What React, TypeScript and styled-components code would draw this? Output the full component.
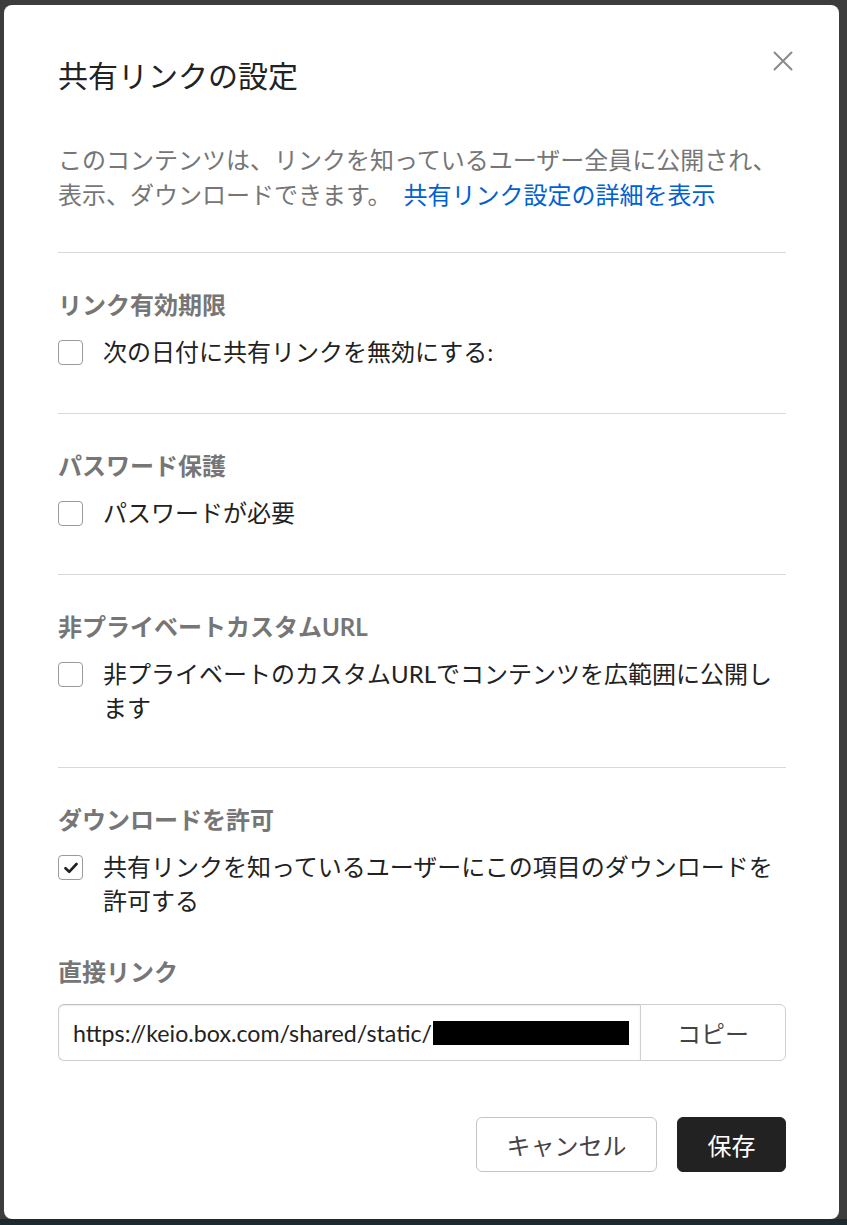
import React from "react";
import styled, { createGlobalStyle } from "styled-components";

const GlobalStyle = createGlobalStyle`
  html, body {
    margin: 0;
    padding: 0;
    background: #3d3d3d;
  }
  body {
    font-family: Lato, "Noto Sans CJK JP", sans-serif;
    -webkit-font-smoothing: antialiased;
  }
  * { box-sizing: border-box; }
`;

const Backdrop = styled.div`
  min-height: 1225px;
  display: flex;
  flex-direction: column;
`;

const Dialog = styled.div`
  position: relative;
  margin: 5px 8px 0 4px;
  background: #fff;
  border-radius: 8px;
  padding: 50px 53px 47px 54px;
`;

const BottomStrip = styled.div`
  margin-top: auto;
  height: 6px;
  background: #1b2a2f;
`;

const Title = styled.h1`
  margin: 0;
  font-size: 30px;
  line-height: 40px;
  font-weight: 400;
  color: #222;
`;

const CloseButton = styled.button`
  position: absolute;
  top: 46px;
  right: 46px;
  width: 20px;
  height: 20px;
  padding: 0;
  border: none;
  background: transparent;
  cursor: pointer;
  display: flex;
`;

const Description = styled.p`
  margin: 47px 0 40px;
  font-size: 24px;
  line-height: 35px;
  color: #767676;
`;

const Link = styled.a`
  margin-left: 12px;
  color: #0061d5;
  text-decoration: none;
`;

const Divider = styled.hr`
  margin: 0;
  border: none;
  height: 1px;
  background: #d9d9d9;
`;

const Section = styled.section<{ $last?: boolean; $wrapped?: boolean }>`
  padding: 36px 0 ${(p) => (p.$last ? "38px" : p.$wrapped ? "42px" : "44px")};
`;

const Heading = styled.h2`
  margin: 0 0 14px;
  font-size: 24px;
  line-height: 32px;
  font-weight: 700;
  color: #767676;
`;

const CheckRow = styled.label`
  display: flex;
  align-items: flex-start;
  gap: 20px;
  font-size: 24px;
  line-height: 34px;
  color: #222;
  cursor: pointer;
`;

const Box = styled.span<{ $checked?: boolean }>`
  flex: none;
  width: 25px;
  height: 25px;
  margin-top: 5px;
  border: 1.5px solid #9a9a9a;
  border-radius: 4px;
  background: #fff;
  display: flex;
  align-items: center;
  justify-content: center;
`;

const LinkHeading = styled(Heading)`
  margin-bottom: 16px;
`;

const UrlGroup = styled.div`
  display: flex;
  height: 57px;
`;

const UrlField = styled.div`
  flex: 1;
  display: flex;
  align-items: center;
  padding-left: 14px;
  border: 1px solid #cfcfcf;
  border-top-color: #bdbdbd;
  border-right: none;
  border-radius: 6px 0 0 6px;
  box-shadow: inset 0 1px 2px rgba(0, 0, 0, 0.08);
  font-size: 23.2px;
  color: #222;
  white-space: nowrap;
  overflow: hidden;
`;

const Redacted = styled.span`
  display: inline-block;
  width: 196px;
  height: 24px;
  background: #000;
  margin-left: 1px;
`;

const CopyButton = styled.button`
  flex: none;
  width: 146px;
  border: 1px solid #cfcfcf;
  border-radius: 0 6px 6px 0;
  background: #fff;
  font-family: inherit;
  font-size: 24px;
  color: #444;
  cursor: pointer;
`;

const Footer = styled.div`
  display: flex;
  justify-content: flex-end;
  gap: 20px;
  margin-top: 56px;
`;

const Button = styled.button<{ $primary?: boolean }>`
  height: 55px;
  width: ${(p) => (p.$primary ? "109px" : "181px")};
  border-radius: 6px;
  border: 1px solid ${(p) => (p.$primary ? "#222" : "#c4c4c4")};
  background: ${(p) => (p.$primary ? "#222" : "#fff")};
  color: ${(p) => (p.$primary ? "#fff" : "#444")};
  font-family: inherit;
  font-size: 24px;
  cursor: pointer;
`;

const CheckIcon = () => (
  <svg width="14" height="12" viewBox="0 0 14 12" fill="none">
    <path d="M1.5 6.2 L5.2 9.8 L12.5 2" stroke="#222" strokeWidth="2.6" strokeLinecap="round" strokeLinejoin="round" />
  </svg>
);

const CloseIcon = () => (
  <svg width="20" height="20" viewBox="0 0 20 20" fill="none">
    <path d="M1.5 1.5 L18.5 18.5 M18.5 1.5 L1.5 18.5" stroke="#8a8a8a" strokeWidth="2" strokeLinecap="round" />
  </svg>
);

type Option = { heading: string; label: string; checked?: boolean; wrapped?: boolean };

const options: Option[] = [
  { heading: "リンク有効期限", label: "次の日付に共有リンクを無効にする:" },
  { heading: "パスワード保護", label: "パスワードが必要" },
  { heading: "非プライベートカスタムURL", label: "非プライベートのカスタムURLでコンテンツを広範囲に公開します", wrapped: true },
  { heading: "ダウンロードを許可", label: "共有リンクを知っているユーザーにこの項目のダウンロードを許可する", checked: true, wrapped: true },
];

export default function App() {
  return (
    <>
      <GlobalStyle />
      <Backdrop>
        <Dialog role="dialog">
          <Title>共有リンクの設定</Title>
          <CloseButton aria-label="閉じる">
            <CloseIcon />
          </CloseButton>
          <Description>
            このコンテンツは、リンクを知っているユーザー全員に公開され、表示、ダウンロードできます。
            <Link href="#">共有リンク設定の詳細を表示</Link>
          </Description>
          {options.map((o, i) => (
            <React.Fragment key={o.heading}>
              <Divider />
              <Section $last={i === options.length - 1} $wrapped={o.wrapped}>
                <Heading>{o.heading}</Heading>
                <CheckRow>
                  <Box $checked={o.checked}>{o.checked && <CheckIcon />}</Box>
                  <span>{o.label}</span>
                </CheckRow>
              </Section>
            </React.Fragment>
          ))}
          <LinkHeading>直接リンク</LinkHeading>
          <UrlGroup>
            <UrlField>
              https://keio.box.com/shared/static/
              <Redacted />
            </UrlField>
            <CopyButton>コピー</CopyButton>
          </UrlGroup>
          <Footer>
            <Button>キャンセル</Button>
            <Button $primary>保存</Button>
          </Footer>
        </Dialog>
        <BottomStrip />
      </Backdrop>
    </>
  );
}
